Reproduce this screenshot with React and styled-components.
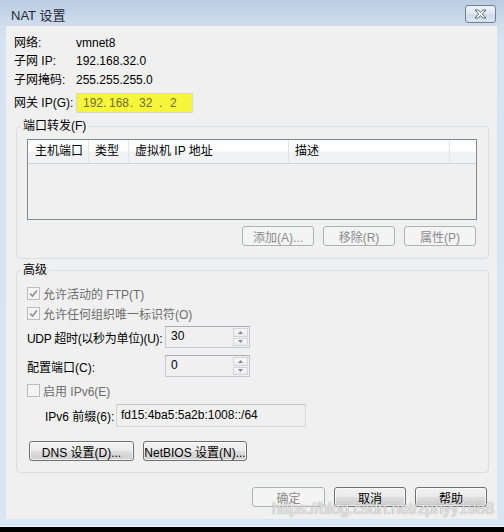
import React from "react";
import styled, { createGlobalStyle } from "styled-components";

const Global = createGlobalStyle`
  html, body { margin: 0; padding: 0; background: #000; }
  body {
    width: 504px; height: 532px; overflow: hidden;
    font-family: "Liberation Sans", "Noto Sans CJK SC", sans-serif;
    font-size: 12px; color: #000;
  }
  * { box-sizing: border-box; }
`;

const Window = styled.div`
  position: relative;
  width: 504px;
  height: 527px;
  border-bottom: 1px solid #eef4fa;
  background: linear-gradient(#b9cce2 0px, #cddbec 22px, #d6e3f1 40px, #d8e5f3 100%);
  display: flex;
  flex-direction: column;
`;

const TitleBar = styled.div`
  height: 26px;
  flex: none;
  display: flex;
  align-items: center;
  justify-content: space-between;
  padding: 0 8px 0 11px;
`;

const Title = styled.span`
  font-size: 13px;
  color: #1f2a36;
  margin-top: 2px;
`;

const CloseButton = styled.div`
  width: 31px;
  height: 18px;
  border: 1px solid #6f7f95;
  border-radius: 3px;
  background: linear-gradient(#eef3f9 0%, #dfe7f1 50%, #d0dbe8 51%, #dbe4ef 100%);
  display: flex;
  align-items: center;
  justify-content: center;
  margin-top: 2px;
`;

const Panel = styled.div`
  margin: 0 7px 0 6px;
  height: 493px;
  flex: none;
  background: #f0f0f0;
  display: flex;
  flex-direction: column;
  padding-top: 8px;
`;

const InfoGrid = styled.div`
  display: grid;
  grid-template-columns: 62px auto;
  justify-content: start;
  align-items: center;
  padding-left: 8px;
`;

const InfoLabel = styled.span`
  line-height: ${(p) => p.$lh || 19}px;
  margin-top: ${(p) => p.$mt || 0}px;
  white-space: nowrap;
`;

const InfoValue = styled.span`
  line-height: ${(p) => p.$lh || 19}px;
`;

const IpInput = styled.div`
  width: 117px;
  height: 20px;
  margin-top: 3px;
  border: 1px solid #d8d8c8;
  background: #f5f53c;
  display: flex;
  align-items: center;
  padding-left: 6px;
  color: #6f6f2c;
  font-size: 12px;
`;

const IpSeg = styled.span`
  width: ${(p) => p.$w}px;
`;

const Group = styled.fieldset`
  margin: ${(p) => p.$mt}px 8px 0 10px;
  padding: ${(p) => p.$pad};
  border: 1px solid #d5dfe5;
  border-radius: 4px;
  min-width: 0;
`;

const Legend = styled.legend`
  padding: 0 2px;
  margin-left: -6px;
  line-height: 14px;
  font-size: 12px;
`;

const Table = styled.div`
  height: 81px;
  border: 1px solid #828790;
  background: #f0f0f0;
`;

const HeaderRow = styled.div`
  display: grid;
  grid-template-columns: 61px 40px 160px 161px 1fr;
  height: 24px;
  border-bottom: 1px solid #d5d5d5;
  background: linear-gradient(#ffffff 0%, #ffffff 45%, #f1f2f4 55%, #f1f2f4 100%);
`;

const HeaderCell = styled.div`
  border-right: ${(p) => (p.$last ? "none" : "1px solid #e2e3e6")};
  padding-left: ${(p) => p.$pl || 6}px;
  line-height: 23px;
  white-space: nowrap;
`;

const ButtonRow = styled.div`
  display: flex;
  justify-content: ${(p) => p.$justify || "flex-end"};
  gap: ${(p) => p.$gap || 8}px;
  margin-top: ${(p) => p.$mt || 0}px;
  padding-right: ${(p) => p.$pr || 0}px;
  padding-left: ${(p) => p.$pl || 0}px;
`;

const Button = styled.button`
  width: ${(p) => p.$w || 72}px;
  height: 20px;
  padding: 0;
  font-family: inherit;
  font-size: 12px;
  border: 1px solid ${(p) => (p.disabled ? "#adb2b5" : "#707070")};
  border-radius: 3px;
  background: ${(p) =>
    p.disabled
      ? "#f4f4f4"
      : "linear-gradient(#f2f2f2 0%, #ebebeb 48%, #dddddd 52%, #cfcfcf 100%)"};
  color: ${(p) => (p.disabled ? "#8b8b8b" : "#000")};
  box-shadow: ${(p) => (p.disabled ? "none" : "inset 0 0 0 1px rgba(255,255,255,0.7)")};
  white-space: nowrap;
`;

const CheckRow = styled.div`
  display: flex;
  align-items: center;
  gap: 3px;
  height: 20px;
  color: #6d6d6d;
  white-space: nowrap;
  margin-top: ${(p) => p.$mt || 0}px;
`;

const Box = styled.span`
  width: 13px;
  height: 13px;
  border: 1px solid #bcbcbc;
  background: #f4f4f4;
  display: flex;
  align-items: center;
  justify-content: center;
`;

const FieldRow = styled.div`
  display: grid;
  grid-template-columns: ${(p) => p.$cols};
  align-items: center;
  margin-top: ${(p) => p.$mt || 0}px;
  padding-left: ${(p) => p.$pl || 0}px;
`;

const FieldLabel = styled.span`
  white-space: nowrap;
  letter-spacing: ${(p) => p.$ls || 0}px;
`;

const Spin = styled.div`
  width: 85px;
  height: 22px;
  border: 1px solid #c5c8cd;
  border-top-color: #abadb3;
  background: #f0f0f0;
  display: flex;
`;

const SpinText = styled.div`
  flex: 1;
  padding: 2px 0 0 5px;
  line-height: 14px;
`;

const SpinButtons = styled.div`
  width: 16px;
  display: flex;
  flex-direction: column;
  gap: 1px;
  padding: 1px 1px 1px 0;
`;

const SpinBtn = styled.div`
  flex: 1;
  border: 1px solid #d3d5d8;
  background: linear-gradient(#f7f7f7, #ececec);
  display: flex;
  align-items: center;
  justify-content: center;
`;

const TextField = styled.div`
  width: 190px;
  height: 23px;
  border: 1px solid #d5d7da;
  border-top-color: #c2c4c8;
  background: #f0f0f0;
  padding: 3px 0 0 4px;
  line-height: 14px;
  white-space: nowrap;
`;

const Watermark = styled.div`
  position: absolute;
  left: 272px;
  top: 500px;
  font-family: "Liberation Sans", sans-serif;
  font-size: 16px;
  letter-spacing: -0.1px;
  color: rgba(255, 255, 255, 0.8);
  text-shadow: 0 0 1px rgba(90, 90, 90, 0.55), 0 0 1px rgba(90, 90, 90, 0.4);
  pointer-events: none;
`;

const Check = () => (
  <svg width="9" height="9" viewBox="0 0 9 9">
    <path d="M1 4.5 L3.5 7 L8 1.5" fill="none" stroke="#8e8e8e" strokeWidth="1.6" />
  </svg>
);

const Arrow = ({ up }) => (
  <svg width="5" height="3" viewBox="0 0 5 3">
    <path d={up ? "M0 3 L2.5 0 L5 3 Z" : "M0 0 L2.5 3 L5 0 Z"} fill="#8a8a8a" />
  </svg>
);

const SpinBox = ({ value }) => (
  <Spin>
    <SpinText>{value}</SpinText>
    <SpinButtons>
      <SpinBtn>
        <Arrow up />
      </SpinBtn>
      <SpinBtn>
        <Arrow />
      </SpinBtn>
    </SpinButtons>
  </Spin>
);

export default function App() {
  return (
    <>
      <Global />
      <Window>
        <TitleBar>
          <Title>NAT 设置</Title>
          <CloseButton>
            <svg width="13" height="10" viewBox="0 0 13 10">
              <path
                d="M1 1 L4 1 L6.5 3.3 L9 1 L12 1 L8.3 5 L12 9 L9 9 L6.5 6.7 L4 9 L1 9 L4.7 5 Z"
                fill="#ffffff"
                stroke="#46566c"
                strokeWidth="0.9"
                strokeLinejoin="round"
              />
            </svg>
          </CloseButton>
        </TitleBar>
        <Panel>
          <InfoGrid>
            <InfoLabel $lh={18}>网络:</InfoLabel>
            <InfoValue $lh={18}>vmnet8</InfoValue>
            <InfoLabel>子网 IP:</InfoLabel>
            <InfoValue>192.168.32.0</InfoValue>
            <InfoLabel>子网掩码:</InfoLabel>
            <InfoValue>255.255.255.0</InfoValue>
            <InfoLabel $mt={3}>网关 IP(G):</InfoLabel>
            <IpInput>
              <IpSeg $w={20}>192</IpSeg>
              <IpSeg $w={6}>.</IpSeg>
              <IpSeg $w={21}>168</IpSeg>
              <IpSeg $w={9}>.</IpSeg>
              <IpSeg $w={20}>32</IpSeg>
              <IpSeg $w={11}>.</IpSeg>
              <IpSeg $w={10}>2</IpSeg>
            </IpInput>
          </InfoGrid>

          <Group $mt={6} $pad="6px 11px 12px 10px">
            <Legend>端口转发(F)</Legend>
            <Table>
              <HeaderRow>
                <HeaderCell $pl={7}>主机端口</HeaderCell>
                <HeaderCell>类型</HeaderCell>
                <HeaderCell>虚拟机 IP 地址</HeaderCell>
                <HeaderCell>描述</HeaderCell>
                <HeaderCell $last />
              </HeaderRow>
            </Table>
            <ButtonRow $mt={6} $gap={9} $pr={1}>
              <Button disabled>添加(A)...</Button>
              <Button disabled>移除(R)</Button>
              <Button disabled>属性(P)</Button>
            </ButtonRow>
          </Group>

          <Group $mt={4} $pad="6px 11px 11px 10px">
            <Legend>高级</Legend>
            <CheckRow>
              <Box>
                <Check />
              </Box>
              允许活动的 FTP(T)
            </CheckRow>
            <CheckRow>
              <Box>
                <Check />
              </Box>
              允许任何组织唯一标识符(O)
            </CheckRow>
            <FieldRow $cols="138px 85px" $mt={3}>
              <FieldLabel $ls={-0.3}>UDP 超时(以秒为单位)(U):</FieldLabel>
              <SpinBox value="30" />
            </FieldRow>
            <FieldRow $cols="138px 85px" $mt={7}>
              <FieldLabel>配置端口(C):</FieldLabel>
              <SpinBox value="0" />
            </FieldRow>
            <CheckRow $mt={3}>
              <Box />
              启用 IPv6(E)
            </CheckRow>
            <FieldRow $cols="71px 190px" $mt={4} $pl={18}>
              <FieldLabel>IPv6 前缀(6):</FieldLabel>
              <TextField>fd15:4ba5:5a2b:1008::/64</TextField>
            </FieldRow>
            <ButtonRow $justify="flex-start" $gap={9} $mt={14} $pl={2}>
              <Button $w={105}>DNS 设置(D)...</Button>
              <Button $w={104}>NetBIOS 设置(N)...</Button>
            </ButtonRow>
          </Group>

          <ButtonRow $mt={14} $gap={9} $pr={10}>
            <Button disabled $w={73}>确定</Button>
            <Button>取消</Button>
            <Button>帮助</Button>
          </ButtonRow>
        </Panel>
        <Watermark>https://blog.csdn.net/zphyy1988</Watermark>
      </Window>
    </>
  );
}
